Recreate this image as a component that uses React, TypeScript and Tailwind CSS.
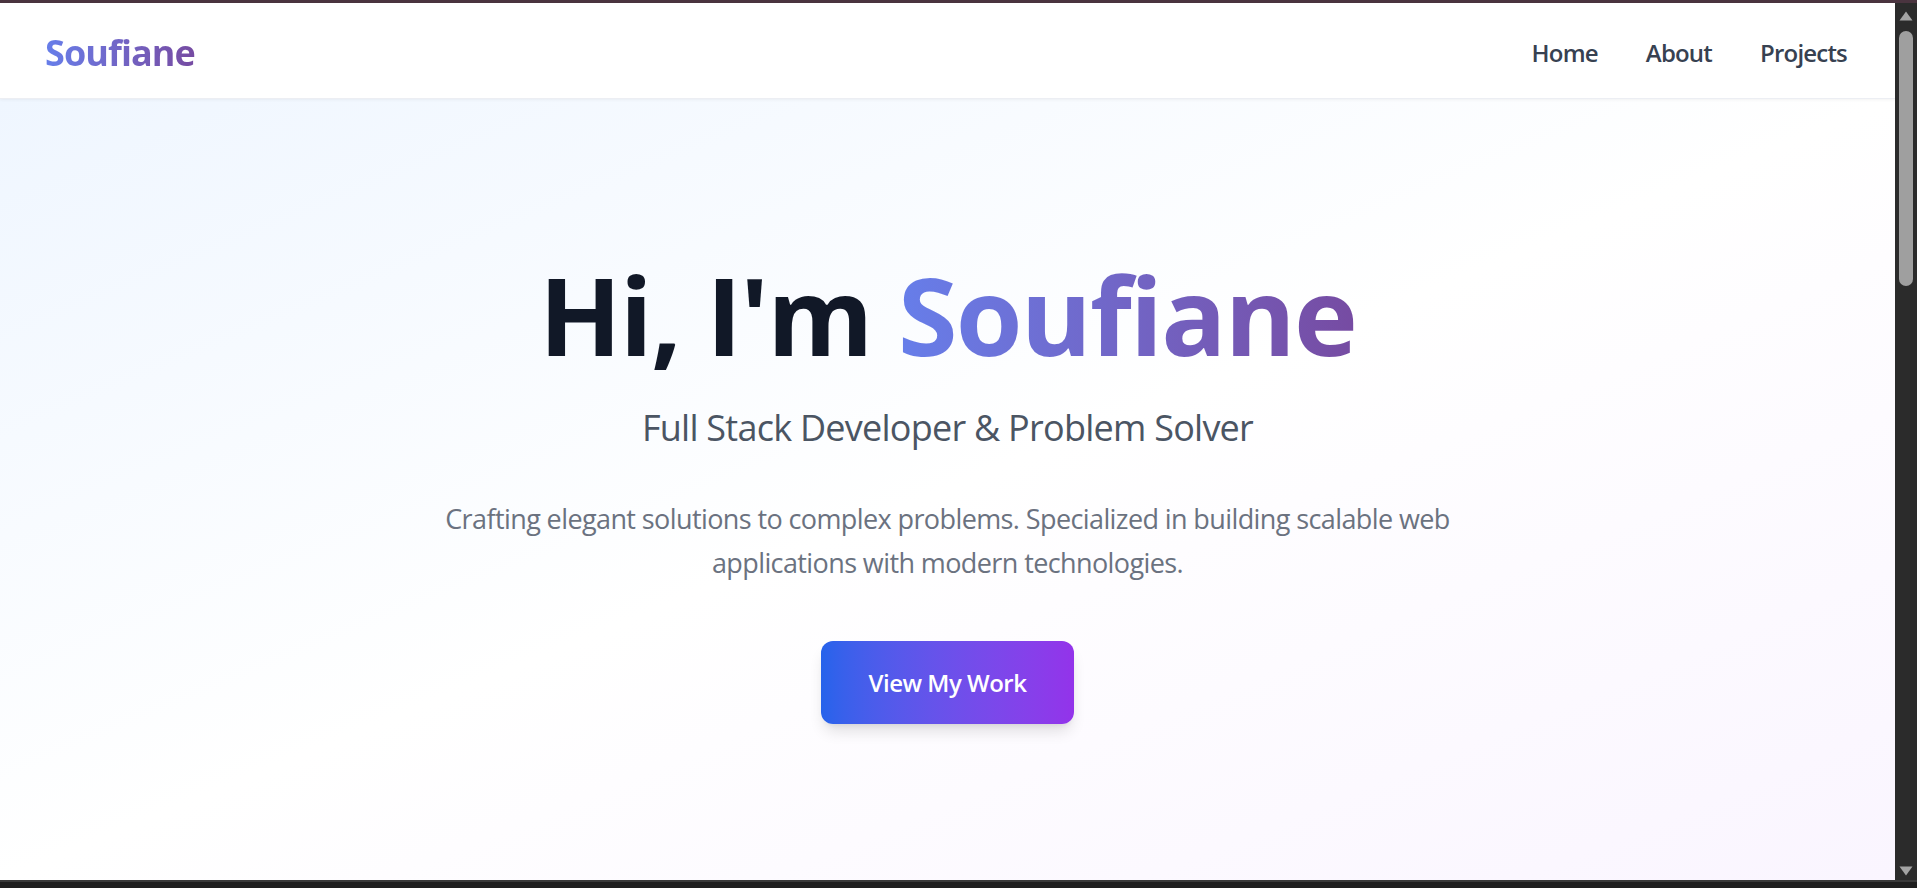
import React from "react";

export default function App() {
  return (
    <div className="h-[888px] w-full flex flex-col overflow-hidden bg-[#1f1f1f] font-['Open_Sans',sans-serif]">
      <div className="h-[3px] shrink-0 bg-[#4a343f]" />
      <div className="flex flex-1 min-h-0">
        <div className="flex-1 min-w-0 flex flex-col">
          <nav className="h-[96px] shrink-0 bg-white border-b border-[#eceef3] shadow-[0_1px_3px_rgba(0,0,0,0.05)] flex items-center justify-between pl-[45px] pr-[48px] pt-[4px] relative z-10">
            <div className="text-[36px] font-bold leading-none bg-linear-to-r from-[#667eea] to-[#764ba2] bg-clip-text text-transparent tracking-[-0.95px]">
              Soufiane
            </div>
            <div className="flex items-center gap-[48px] text-[24px] leading-[36px] font-semibold text-[#374151] tracking-[-0.8px]">
              <span>Home</span>
              <span>About</span>
              <span>Projects</span>
            </div>
          </nav>
          <main className="flex-1 bg-linear-to-br from-[#eff6ff] via-white to-[#faf5ff] flex flex-col items-center pt-[162px] text-center">
            <h1 className="text-[108px] leading-none font-bold text-[#111827] tracking-[-1.75px]">
              Hi, I'm{" "}
              <span className="bg-linear-to-r from-[#667eea] to-[#764ba2] bg-clip-text text-transparent">
                Soufiane
              </span>
            </h1>
            <p className="mt-[35px] text-[36px] leading-[48px] text-[#4b5563] tracking-[-0.75px]">
              Full Stack Developer &amp; Problem Solver
            </p>
            <p className="mt-[45px] max-w-[1040px] text-[27px] leading-[44px] text-[#6b7280] tracking-[-0.6px]">
              Crafting elegant solutions to complex problems. Specialized in building scalable web applications with modern technologies.
            </p>
            <button className="mt-[56px] h-[83px] px-[48px] rounded-[12px] bg-linear-to-r from-[#2563eb] to-[#9333ea] text-white text-[24px] font-semibold shadow-[0_10px_15px_-3px_rgba(0,0,0,0.12),0_4px_6px_-4px_rgba(0,0,0,0.1)] tracking-[-0.5px]">
              View My Work
            </button>
          </main>
        </div>
        <div className="w-[22px] shrink-0 bg-[#2b2b2b] flex flex-col items-center">
          <svg width="14" height="10" viewBox="0 0 14 10" className="mt-[8px]">
            <path d="M7 0.5 L13.5 9.5 L0.5 9.5 Z" fill="#a3a3a3" />
          </svg>
          <div className="mt-[10px] w-[14px] h-[255px] rounded-full bg-[#9f9f9f]" />
          <div className="flex-1" />
          <svg width="14" height="10" viewBox="0 0 14 10" className="mb-[4px]">
            <path d="M0.5 0.5 L13.5 0.5 L7 9.5 Z" fill="#a3a3a3" />
          </svg>
        </div>
      </div>
      <div className="h-[8px] shrink-0 border-t-2 border-[#3a3a3a] bg-[#1f1f1f]" />
    </div>
  );
}
